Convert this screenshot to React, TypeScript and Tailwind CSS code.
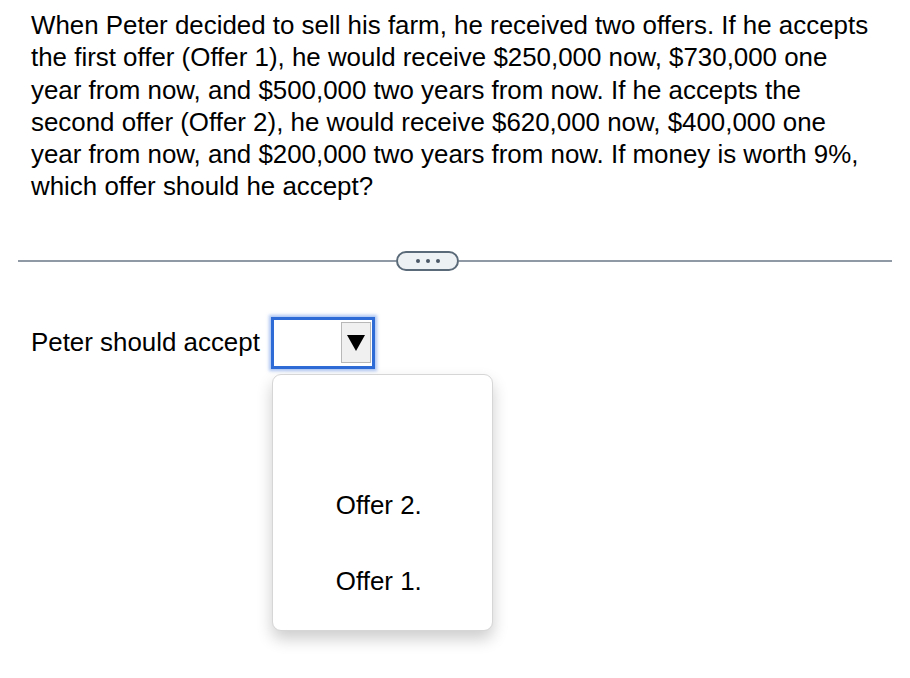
import React from "react";

export default function App() {
  return (
    <div className="w-[910px] h-[678px] bg-white relative overflow-hidden" style={{ fontFamily: '"Liberation Sans", Arial, sans-serif' }}>
      <div className="pt-[9px] pl-[31px] text-[25.9px] leading-[32.3px] text-black">
        When Peter decided to sell his farm, he received two offers. If he accepts<br />
        the first offer (Offer 1), he would receive $250,000 now, $730,000 one<br />
        year from now, and $500,000 two years from now. If he accepts the<br />
        second offer (Offer 2), he would receive $620,000 now, $400,000 one<br />
        year from now, and $200,000 two years from now. If money is worth 9%,<br />
        which offer should he accept?
      </div>
      <div className="mt-[48px] ml-[18px] w-[874px] flex items-center">
        <div className="w-[378px] h-[2px] bg-[#8e99a5]" />
        <div className="w-[63px] h-[20px] rounded-full border-2 border-[#5b6a79] bg-[#eef1f3] flex items-center justify-center gap-[6px]">
          <span className="w-[4px] h-[4px] rounded-full bg-[#4b5867]" />
          <span className="w-[4px] h-[4px] rounded-full bg-[#4b5867]" />
          <span className="w-[4px] h-[4px] rounded-full bg-[#4b5867]" />
        </div>
        <div className="flex-1 h-[2px] bg-[#8e99a5]" />
      </div>
      <div className="mt-[46px] pl-[31px] flex items-center text-[25.9px] text-black">
        <span className="mr-[11px]">Peter should accept</span>
        <div className="relative">
          <div className="w-[104px] h-[52px] border-[3px] border-[#2f6bd6] shadow-[0_0_3px_2px_rgba(90,140,230,0.5)] bg-white flex items-center justify-end pr-[1px]">
            <div className="w-[30px] h-[41px] bg-[#f0f0f0] border border-[#b8b8b8] flex items-center justify-center">
              <svg width="20" height="18" viewBox="0 0 20 18"><path d="M1 1 L19 1 L10 17 Z" fill="#000" /></svg>
            </div>
          </div>
          <div className="absolute left-[1px] top-[57px] w-[221px] h-[257px] bg-white rounded-[9px] border border-[#d6d6d6] shadow-[0_8px_16px_rgba(0,0,0,0.2)] flex flex-col items-start pl-[63px] pt-[115px]">
            <div className="leading-[30px]">Offer 2.</div>
            <div className="leading-[30px] mt-[46px]">Offer 1.</div>
          </div>
        </div>
      </div>
    </div>
  );
}
